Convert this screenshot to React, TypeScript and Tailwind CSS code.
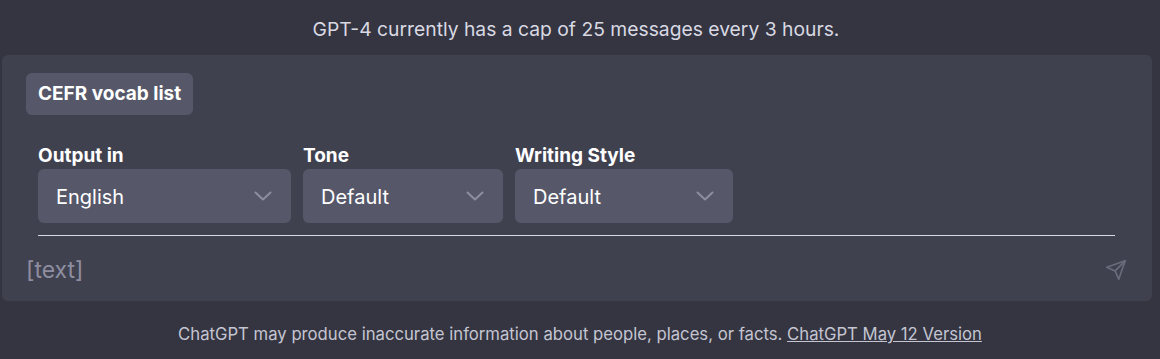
import React from "react";

const Chevron = () => (
  <svg width="18" height="10" viewBox="0 0 18 10" fill="none" stroke="currentColor" strokeWidth="2" strokeLinecap="round" strokeLinejoin="round" className="text-[#8e8ea0]">
    <path d="M1.5 1.5 L9 8.5 L16.5 1.5" />
  </svg>
);

const Select = ({ label, value, w }: { label: string; value: string; w: string }) => (
  <div className="flex flex-col">
    <div className="text-[19px] font-bold text-white leading-[28px] pt-[1px] -mb-[1px]">{label}</div>
    <div className={`${w} h-[54px] rounded-[6px] bg-[#565869] flex items-center justify-between pl-[18px] pr-[19px]`}>
      <span className="text-[20px] text-white pt-[1px]">{value}</span>
      <Chevron />
    </div>
  </div>
);

export default function App() {
  return (
    <div
      className="w-[1160px] h-[359px] bg-[#343541] flex flex-col items-center overflow-hidden"
      style={{ fontFamily: "Inter, 'Liberation Sans', Arial, sans-serif" }}
    >
      <div className="h-[55px] flex items-center justify-center text-[19.3px] text-[#d9d9e3] pt-[3px] pr-[8px]">
        GPT-4 currently has a cap of 25 messages every 3 hours.
      </div>
      <div className="self-start ml-[2px] w-[1150px] h-[246px] bg-[#40414f] rounded-[6px] flex flex-col">
        <div className="pt-[18px] pl-[24px]">
          <div className="inline-flex items-center h-[42px] px-[12px] rounded-[6px] bg-[#565869] text-white font-bold text-[19px]">
            CEFR vocab list
          </div>
        </div>
        <div className="flex gap-[12px] pl-[36px] mt-[26px]">
          <Select label="Output in" value="English" w="w-[253px]" />
          <Select label="Tone" value="Default" w="w-[200px]" />
          <Select label="Writing Style" value="Default" w="w-[218px]" />
        </div>
        <div className="ml-[36px] mr-[37px] mt-[12px] h-[1px] bg-[#d9d9e3]" />
        <div className="flex items-center justify-between pl-[24px] pr-[25px] mt-[17px]">
          <span className="text-[23px] text-[#8e8ea0]">[text]</span>
          <svg width="22" height="22" viewBox="0 0 24 24" fill="none" stroke="#6b6c7b" strokeWidth="1.8" strokeLinejoin="round" strokeLinecap="round">
            <line x1="22" y1="2" x2="11" y2="13" />
            <polygon points="22 2 15 22 11 13 2 9 22 2" />
          </svg>
        </div>
      </div>
      <div className="flex-1 flex items-center justify-center text-[16.7px] text-[#c5c5d2] pt-[9px]">
        <span>
          ChatGPT may produce inaccurate information about people, places, or facts.{" "}
          <span className="underline">ChatGPT May 12 Version</span>
        </span>
      </div>
    </div>
  );
}
